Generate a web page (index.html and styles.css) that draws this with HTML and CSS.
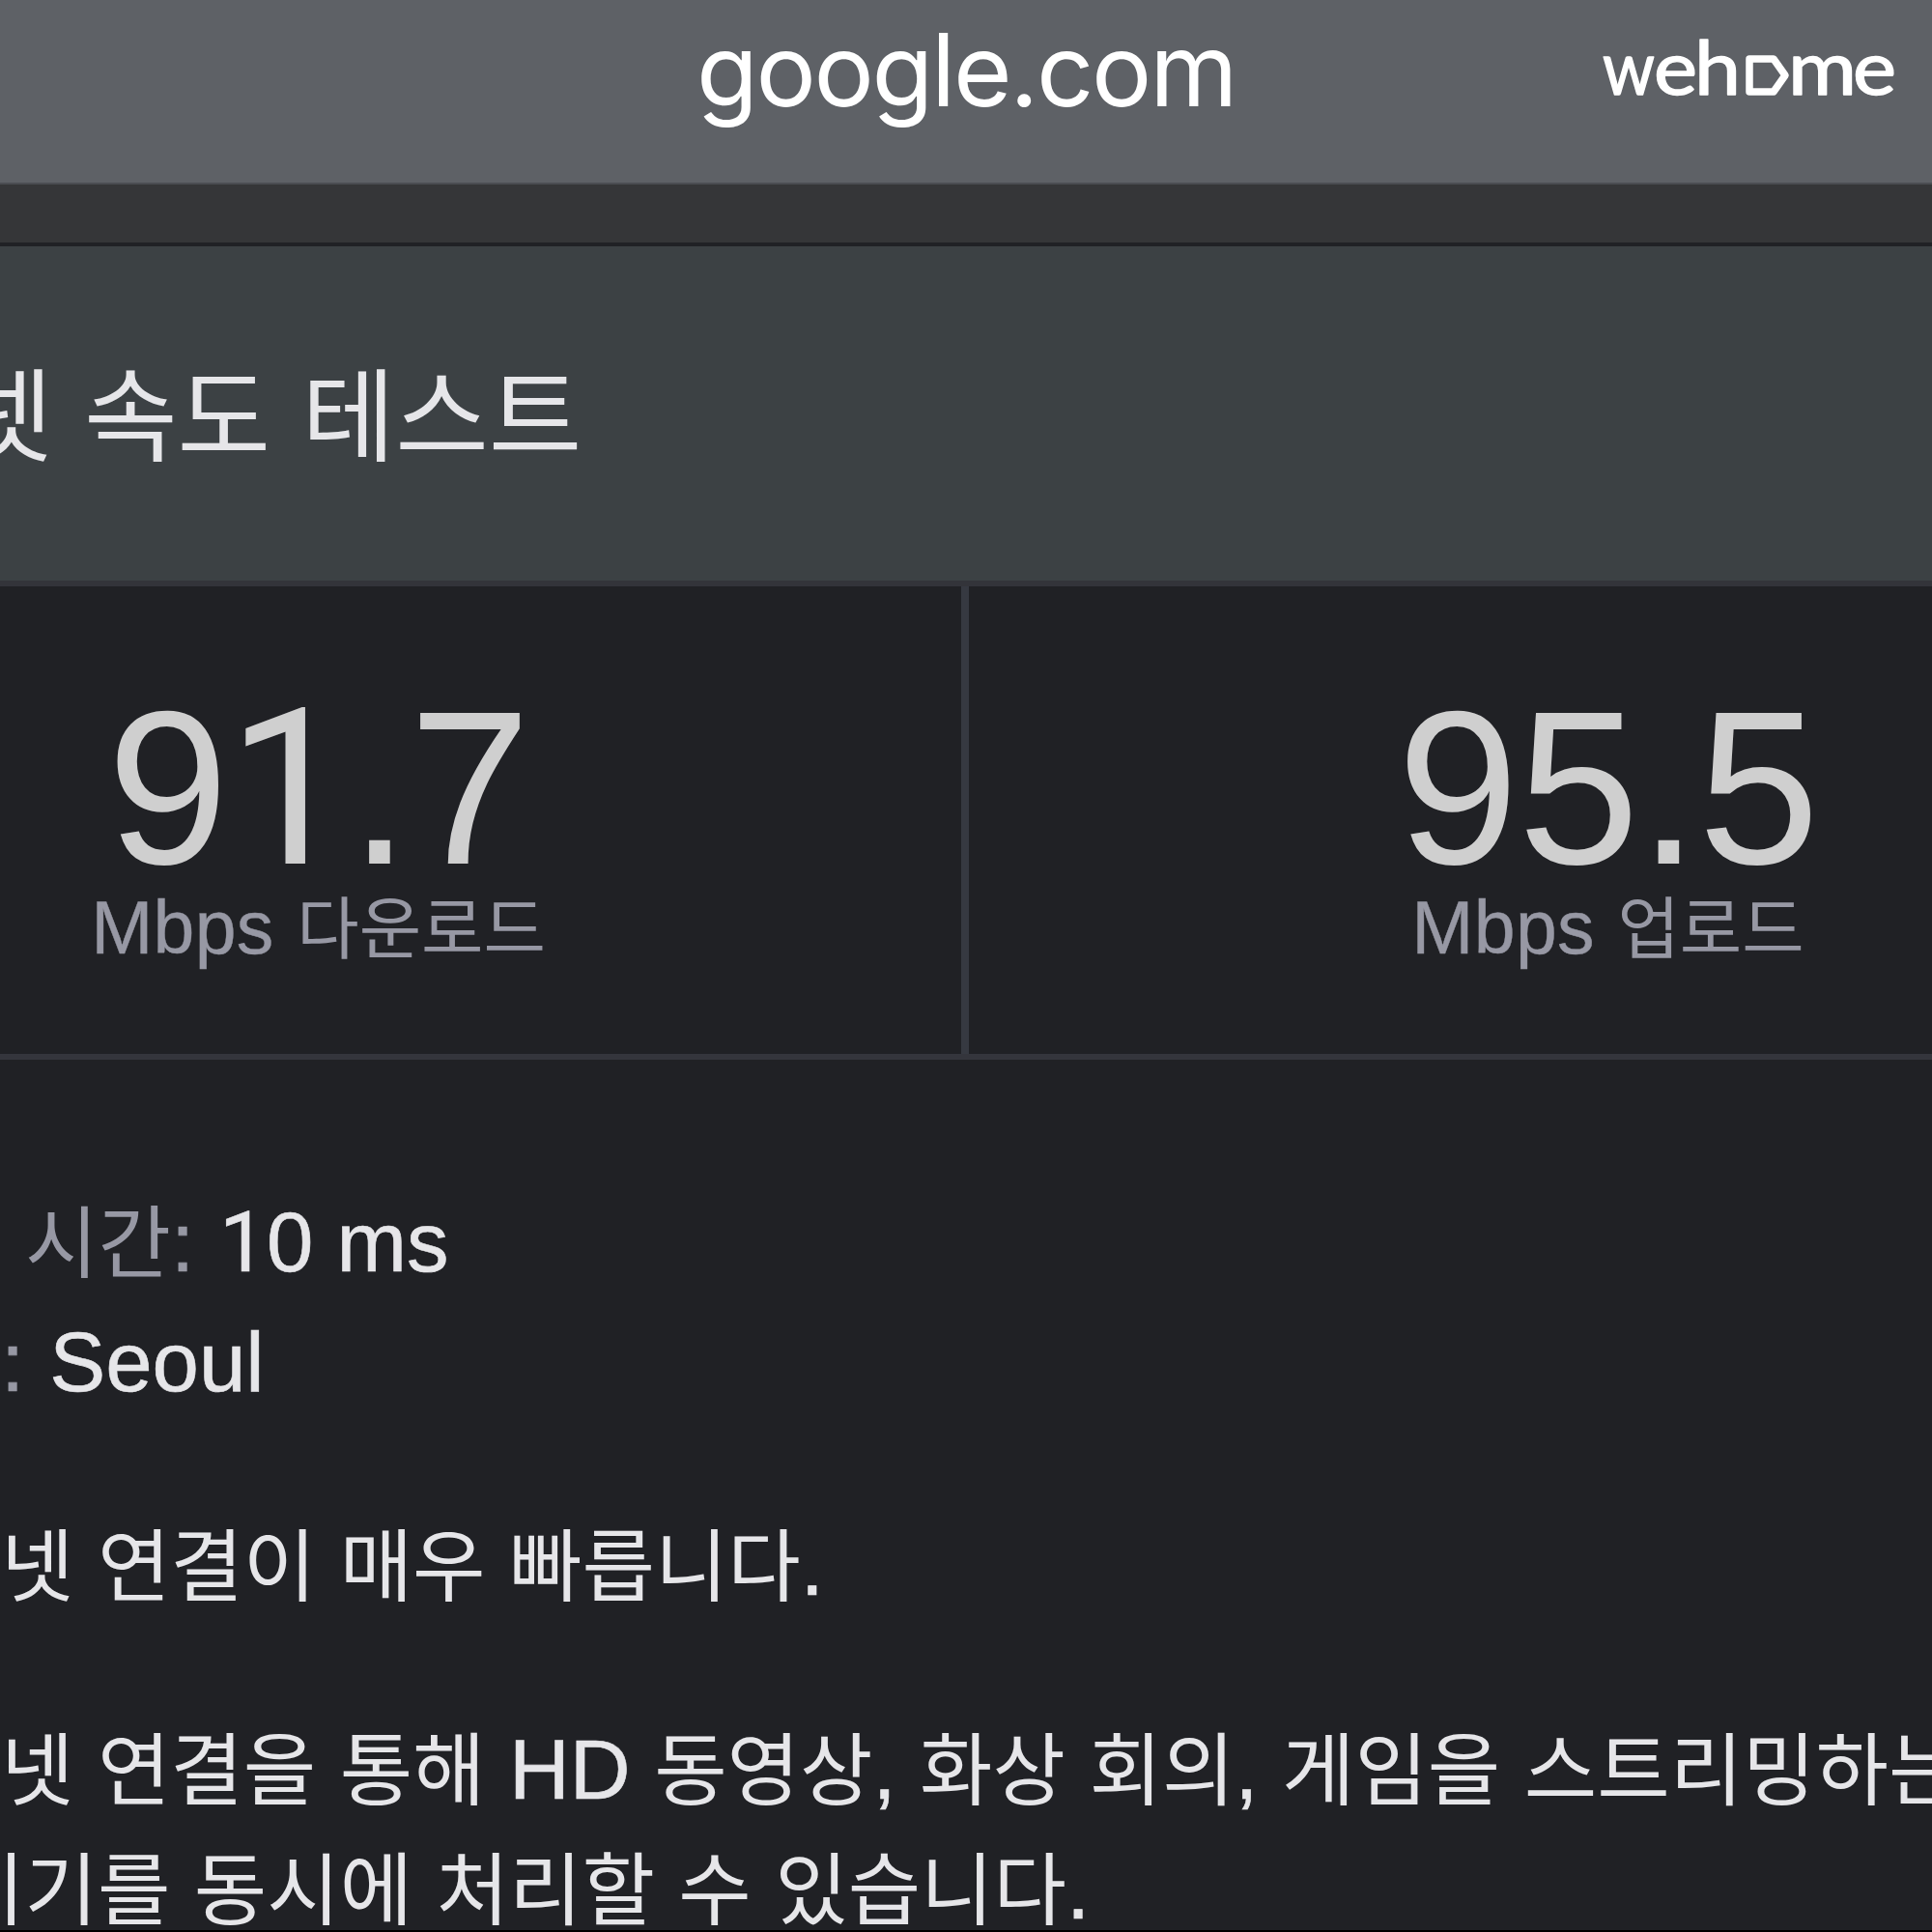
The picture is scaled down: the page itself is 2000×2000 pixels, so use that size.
FILE: index.html
```html
<!DOCTYPE html>
<html lang="ko">
  <head>
    <meta charset="UTF-8" />
    <meta name="viewport" content="width=device-width, initial-scale=1.0" />
    <title>인터넷 속도 테스트</title>
    <link rel="stylesheet" href="styles.css">
  </head>
  <body>
    <div class="address-bar">
      <span class="url">google.com</span>
      <svg class="logo" width="320" height="80" viewBox="0 0 320 80">
        <g class="logo-text">
          <text x="8" y="66" textLength="54" lengthAdjust="spacingAndGlyphs">w</text>
          <text x="61" y="66" textLength="45" lengthAdjust="spacingAndGlyphs">e</text>
          <text x="103" y="66" textLength="48" lengthAdjust="spacingAndGlyphs">h</text>
          <text x="200" y="66" textLength="71" lengthAdjust="spacingAndGlyphs">m</text>
          <text x="267" y="66" textLength="45" lengthAdjust="spacingAndGlyphs">e</text>
        </g>
        <path class="logo-door" d="M160 29h25l12 17l-12 17h-25z" />
      </svg>
    </div>
    <div class="toolbar"></div>

    <header class="title-bar">
      <h1>넷 속도 테스트</h1>
    </header>

    <section class="results">
      <div class="result download">
        <div class="speed">9<span class="one">1</span>.7</div>
        <div class="unit"><span class="latin">Mbps</span> 다운로드</div>
      </div>
      <div class="result upload">
        <div class="speed">95.5</div>
        <div class="unit"><span class="latin">Mbps</span> 업로드</div>
      </div>
    </section>

    <section class="details">
      <p class="latency"><span class="label">시간<span class="latin">:</span></span> <span class="latin"><span class="one">1</span>0 ms</span></p>
      <p class="server"><span class="label latin">:</span> <span class="latin">Seoul</span></p>
      <p class="summary">넷 연결이 매우 빠릅니다<span class="latin">.</span></p>
      <p class="description">넷 연결을 통해 <span class="latin">HD</span> 동영상<span class="latin">,</span> 화상 회의<span class="latin">,</span> 게임을 스트리밍하는</p>
      <p class="description-end">기기를 동시에 처리할 수 있습니다<span class="latin">.</span></p>
    </section>
  </body>
</html>
```
FILE: styles.css
```css
* {
  box-sizing: border-box;
}
body {
  margin: 0;
  height: 2000px;
  overflow: hidden;
  background-color: #202125;
  color: #e6e6e9;
  font-family: "Noto Sans CJK KR", sans-serif;
  white-space: nowrap;
  border-bottom: 2px solid #000;
}
h1,
p {
  margin: 0;
  font-weight: normal;
}
.latin {
  font-family: "Liberation Sans", Arial, sans-serif;
  line-height: 0;
  word-spacing: 0;
}
/* figure one without a foot */
.one {
  font-family: Roboto, sans-serif;
  line-height: 0;
}
.address-bar {
  display: grid;
  grid-template-columns: 1fr auto 1fr;
  height: 191px;
  background-color: #5e6166;
  border-bottom: 2px solid #4b4d52;
}
.url {
  grid-column: 2;
  color: #fff;
  font-family: Inter, sans-serif;
  font-size: 104px;
  line-height: 144px;
  letter-spacing: -2.3px;
}
.logo {
  justify-self: end;
  margin: 32px 29px 0 0;
  overflow: visible;
}
.logo-text {
  fill: #fff;
  stroke: #fff;
  stroke-width: 1.4;
  stroke-linejoin: round;
  font-family: Lato, sans-serif;
  font-size: 78px;
}
.logo-door {
  fill: none;
  stroke: #fff;
  stroke-width: 7.5;
  stroke-linejoin: round;
}
.toolbar {
  height: 64px;
  background-color: #353638;
  border-bottom: 4px solid #202125;
}
.title-bar {
  height: 352px;
  padding-top: 88px;
  background-color: #3c4144;
  border-bottom: 6px solid #33343a;
}
.title-bar h1 {
  margin-left: -42px;
  font-size: 105px;
  line-height: 160px;
  word-spacing: 3px;
}
.results {
  display: flex;
  height: 490px;
  overflow: hidden;
  border-bottom: 6px solid #34353c;
}
.result {
  flex: none;
  width: 1331px;
  padding-top: 119px;
  text-align: center;
}
.download {
  margin-left: -336px;
}
.upload {
  border-left: 8px solid #363941;
}
.speed {
  color: #cfcfcf;
  font-family: "Liberation Sans", Arial, sans-serif;
  font-size: 226px;
  line-height: 180px;
  letter-spacing: -1px;
}
.unit {
  color: #9798a4;
  font-size: 70px;
  line-height: 102px;
  word-spacing: 4px;
}
.unit .latin {
  font-size: 77px;
  letter-spacing: 0.3px;
  -webkit-text-stroke: 0.4px;
}
.details {
  padding-top: 122px;
  overflow: hidden;
  font-size: 82px;
  line-height: 124px;
  word-spacing: 1.5px;
}
.details .latin {
  font-size: 87px;
  -webkit-text-stroke: 0.6px;
}
.label {
  color: #9798a4;
}
.latency {
  margin-left: 26px;
}
.server {
  margin-left: 1px;
}
.latency,
.server {
  word-spacing: 3px;
}
.summary,
.description {
  margin-top: 87px;
  margin-left: 1px;
}
.description-end {
  margin-left: -50px;
}
```
